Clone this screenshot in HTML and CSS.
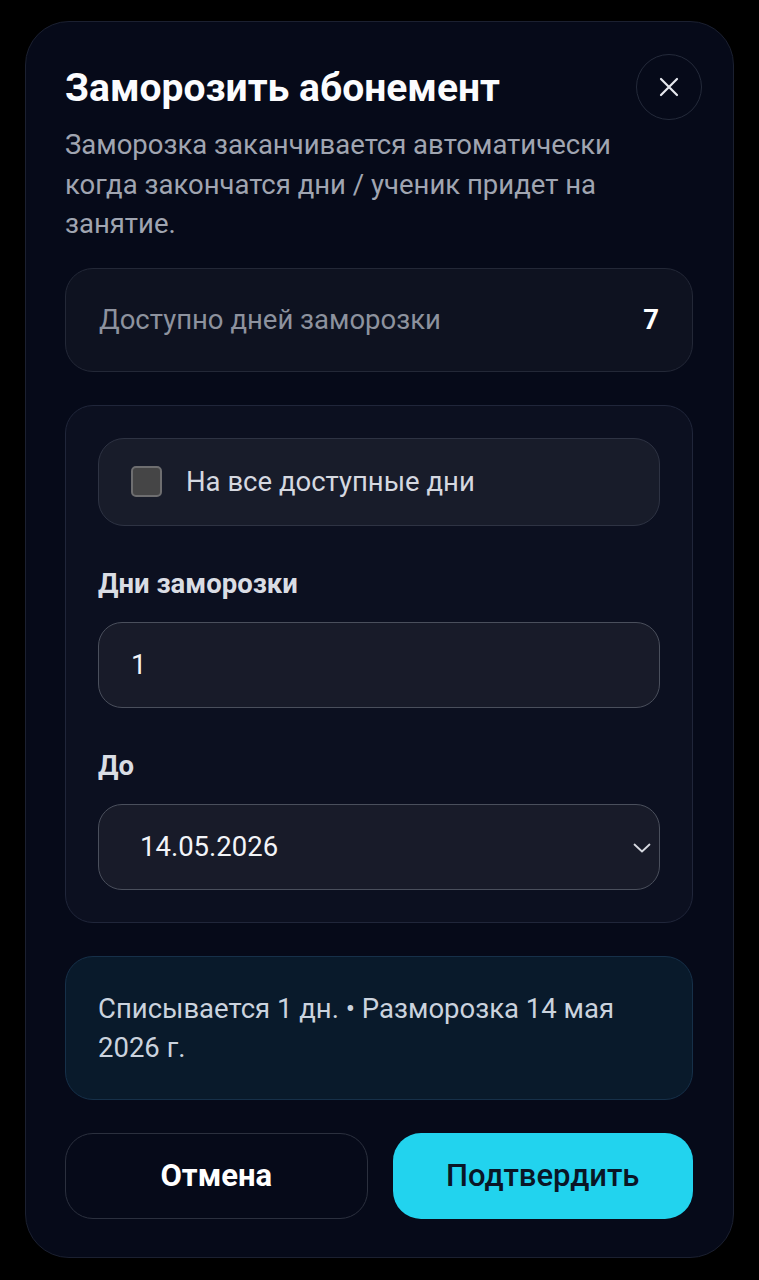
FILE: index.html
```html
<!DOCTYPE html>
<html lang="ru">
<head>
<meta charset="utf-8">
<title>Заморозить абонемент</title>
<link rel="stylesheet" href="styles.css">
</head>
<body>
<div class="modal">
  <div class="header">
    <div class="heading">
      <h1 class="title">Заморозить абонемент</h1>
      <p class="desc">Заморозка заканчивается автоматически когда закончатся дни / ученик придет на занятие.</p>
    </div>
    <button class="close" aria-label="Закрыть">
      <svg width="20" height="20" viewBox="0 0 20 20"><path d="M2 2 L18 18 M18 2 L2 18" stroke="#e6e8ee" stroke-width="2.2" stroke-linecap="round" fill="none"/></svg>
    </button>
  </div>
  <div class="body">
    <div class="stat">
      <span class="stat-label">Доступно дней заморозки</span>
      <span class="stat-value">7</span>
    </div>
    <div class="panel">
      <label class="check-row">
        <span class="checkbox"></span>
        <span class="check-label">На все доступные дни</span>
      </label>
      <div class="field">
        <div class="field-label">Дни заморозки</div>
        <div class="input">1</div>
      </div>
      <div class="field">
        <div class="field-label">До</div>
        <div class="select">
          <span>14.05.2026</span>
          <svg class="chev" width="18" height="10" viewBox="0 0 18 10"><path d="M1.5 1.5 L9 8.5 L16.5 1.5" stroke="#d6d9e0" stroke-width="1.8" fill="none" stroke-linecap="round" stroke-linejoin="round"/></svg>
        </div>
      </div>
    </div>
    <div class="info">Списывается 1 дн. • Разморозка 14 мая 2026 г.</div>
    <div class="actions">
      <button class="btn btn-cancel">Отмена</button>
      <button class="btn btn-confirm">Подтвердить</button>
    </div>
  </div>
</div>
</body>
</html>
```
FILE: styles.css
```css
* { box-sizing: border-box; }
html, body { margin: 0; padding: 0; background: #000; }
body {
  font-family: Roboto, "Noto Sans", "Liberation Sans", sans-serif;
  color: #fff;
  padding: 21px 25px 0 25px;
}
.modal {
  width: 709px;
  height: 1237px;
  background: #060a19;
  border: 1px solid #1b2030;
  border-radius: 44px;
  padding: 32px 40px 40px 39px;
  display: flex;
  flex-direction: column;
}
.header {
  display: flex;
  align-items: flex-start;
  gap: 12px;
  margin-bottom: 24px;
}
.heading {
  flex: 1;
  min-width: 0;
  padding-top: 12px;
}
.title {
  margin: 0;
  font-size: 39px;
  font-weight: 700;
  line-height: 44px;
  color: #fbfcfe;
}
.close {
  flex: none;
  width: 66px;
  height: 66px;
  border-radius: 50%;
  border: 1px solid #242a3a;
  background: transparent;
  margin-right: -9px;
  display: flex;
  align-items: center;
  justify-content: center;
  padding: 0;
}
.desc {
  margin: 15px 0 0 0;
  font-size: 27.5px;
  line-height: 39.5px;
  color: #a0a5b1;
}
.body {
  display: flex;
  flex-direction: column;
  gap: 33px;
}
.stat {
  height: 104px;
  border-radius: 28px;
  background: #0e1220;
  border: 1px solid #232837;
  display: flex;
  align-items: center;
  justify-content: space-between;
  padding: 0 33px;
  font-size: 27.5px;
}
.stat-label { color: #8d929e; }
.stat-value { color: #fff; font-weight: 700; }
.panel {
  border-radius: 28px;
  background: #0c1020;
  border: 1px solid #20263a;
  padding: 32px;
  display: flex;
  flex-direction: column;
  gap: 43px;
}
.check-row {
  height: 88px;
  border-radius: 26px;
  background: #181c2a;
  border: 1px solid #2e3343;
  display: flex;
  align-items: center;
  padding: 0 32px;
  gap: 24px;
}
.checkbox {
  width: 31px;
  height: 31px;
  border-radius: 5px;
  background: #454546;
  border: 2px solid #6e6e70;
}
.check-label {
  font-size: 27.5px;
  color: #d5d8e0;
}
.field {
  display: flex;
  flex-direction: column;
  gap: 23px;
}
.field-label {
  font-size: 27.5px;
  font-weight: 700;
  line-height: 30px;
  color: #dadde4;
}
.input, .select {
  height: 86px;
  border-radius: 24px;
  background: #181b29;
  border: 1px solid #4a4f5c;
  display: flex;
  align-items: center;
  font-size: 27.5px;
  color: #f2f4f8;
}
.input { padding: 0 32px; }
.select {
  padding: 0 8px 0 41px;
  justify-content: space-between;
}
.chev { margin-top: 2px; }
.info {
  border-radius: 28px;
  background: #091a2b;
  border: 1px solid #163049;
  padding: 32px 32px;
  font-size: 27.5px;
  line-height: 39px;
  color: #cbd3de;
}
.actions {
  display: flex;
  gap: 25px;
}
.btn {
  flex: 1;
  height: 86px;
  border-radius: 28px;
  font-family: Roboto, "Noto Sans", "Liberation Sans", sans-serif;
  font-size: 31px;
  padding: 0;
}
.btn-cancel {
  background: transparent;
  border: 1px solid #2b303e;
  color: #fff;
  font-weight: 700;
}
.btn-confirm {
  background: #22d3ee;
  border: none;
  color: #0a1626;
  font-weight: 500;
}
```
